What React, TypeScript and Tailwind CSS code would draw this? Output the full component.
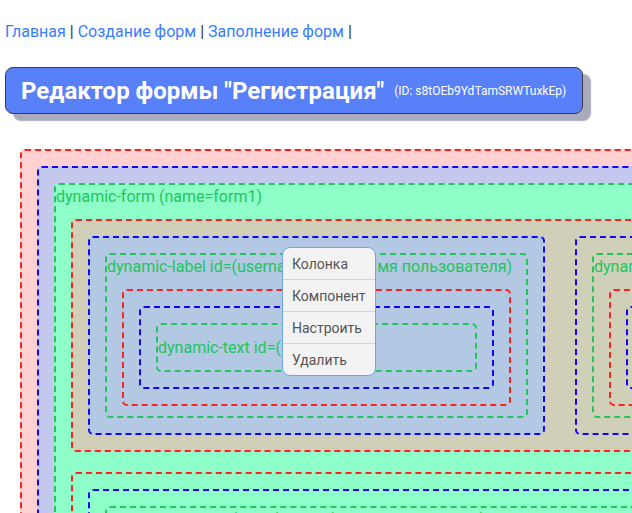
import React from "react";

const Red = ({ className = "", children }: { className?: string; children?: React.ReactNode }) => (
  <div className={`border-2 border-dashed border-[#ff2020] rounded-[5px] p-[15px] ${className}`}>{children}</div>
);
const Blue = ({ className = "", children }: { className?: string; children?: React.ReactNode }) => (
  <div className={`border-2 border-dashed border-[#1a00ff] rounded-[5px] p-[15px] ${className}`}>{children}</div>
);

const TextBox = ({ text }: { text: string }) => (
  <div className="border-2 border-dashed border-[#22c55e] rounded-[5px] py-[10px] text-[16px] leading-[25px] text-[#22c55e] whitespace-nowrap overflow-hidden">
    {text}
  </div>
);

const LabelBox = ({ text }: { text: string }) => (
  <div className="border-2 border-dashed border-[#22c55e] rounded-[5px] text-[16px] leading-[24px] text-[#22c55e]">
    <div className="whitespace-nowrap overflow-hidden">{text}</div>
    <div className="mx-[15px] mt-[10px] mb-[10px]">
      <Red>
        <Blue>
          <TextBox text="dynamic-text id=(username)" />
        </Blue>
      </Red>
    </div>
  </div>
);

const Column = ({ text, className = "" }: { text: string; className?: string }) => (
  <Blue className={`shrink-0 ${className}`}>
    <LabelBox text={text} />
  </Blue>
);

export default function App() {
  return (
    <div className="relative w-[632px] h-[513px] overflow-hidden bg-white font-['Roboto',sans-serif]">
      <nav className="pt-[22px] pl-[5px] text-[16px] leading-[20px] whitespace-nowrap text-[#333]">
        <a className="text-[#3b7cfd]">Главная</a> | <a className="text-[#3b7cfd]">Создание форм</a> |{" "}
        <a className="text-[#3b7cfd]">Заполнение форм</a> |
      </nav>

      <div className="mt-[25px] ml-[5px] w-[578px] h-[47px] flex items-center pl-[15px] pt-[1px] bg-[#5880f9] border border-[#3a3a4a] rounded-[8px] shadow-[8px_7px_1px_#a9abbd] text-white whitespace-nowrap">
        <span className="text-[24px] font-bold leading-[28px]">Редактор формы "Регистрация"</span>
        <span className="ml-[10px] text-[12px] leading-[14px]">(ID: s8tOEb9YdTamSRWTuxkEp)</span>
      </div>

      <div className="mt-[35px] ml-[20px] w-[1100px]">
        <Red className="bg-[#ffd1d1]">
          <Blue className="bg-[#c3c8ec]">
            <div className="border-2 border-dashed border-[#22c55e] rounded-[5px] bg-[#8effc8] text-[16px] leading-[24px] text-[#22c55e]">
              <div className="whitespace-nowrap">dynamic-form (name=form1)</div>
              <div className="px-[15px] py-[10px] flex flex-col gap-[20px]">
                <Red className="bg-[#d0d0b9] flex gap-[30px]">
                  <Column text="dynamic-label id=(username) label=(Имя пользователя)" className="w-[457px] bg-[#b3c8e3]" />
                  <Column text="dynamic-label id=(password) label=(Пароль)" className="w-[457px]" />
                </Red>
                <Red className="flex">
                  <Column text="dynamic-label id=(email) label=(Электронная почта)" className="w-full" />
                </Red>
              </div>
            </div>
          </Blue>
        </Red>
      </div>

      <div className="absolute left-[282px] top-[247px] w-[94px] bg-[#f3f3f3] border border-[#6ea3ee] rounded-[8px] overflow-hidden text-[14px] text-[#555] whitespace-nowrap">
        <div className="h-[32px] pl-[9px] pt-[1px] flex items-center border-b border-[#d4d4d4]">Колонка</div>
        <div className="h-[32px] pl-[9px] pt-[1px] flex items-center border-b border-[#d4d4d4]">Компонент</div>
        <div className="h-[32px] pl-[9px] pt-[1px] flex items-center border-b border-[#d4d4d4]">Настроить</div>
        <div className="h-[31px] pl-[9px] pt-[1px] flex items-center">Удалить</div>
      </div>
    </div>
  );
}
